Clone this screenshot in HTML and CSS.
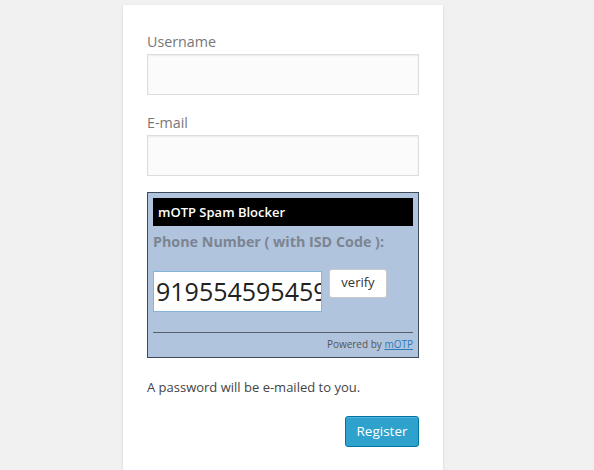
FILE: index.html
```html
<!DOCTYPE html>
<html>
<head>
<meta charset="utf-8">
<link rel="stylesheet" href="styles.css">
</head>
<body>
<form class="card">
  <label class="field-label">Username</label>
  <div class="text-input"></div>
  <label class="field-label second">E-mail</label>
  <div class="text-input"></div>
  <div class="motp">
    <div class="motp-title">mOTP Spam Blocker</div>
    <div class="motp-label">Phone Number ( with ISD Code ):</div>
    <div class="motp-row">
      <div class="phone-input">919554595459</div>
      <div class="verify-btn">verify</div>
    </div>
    <div class="motp-rule"></div>
    <div class="powered">Powered by <span class="powered-link">mOTP</span></div>
  </div>
  <p class="note">A password will be e-mailed to you.</p>
  <div class="actions"><div class="register-btn">Register</div></div>
</form>
</body>
</html>
```
FILE: styles.css
```css
html, body { margin: 0; padding: 0; }
body {
  background: #f1f1f1;
  font-family: "Open Sans", "Noto Sans", sans-serif;
  height: 470px;
  overflow: hidden;
}
.card {
  display: block;
  box-sizing: border-box;
  width: 320px;
  margin: 5px 0 0 123px;
  padding: 26px 24px 24px;
  background: #fff;
  box-shadow: 0 1px 3px rgba(0,0,0,0.13);
}
.field-label {
  display: block;
  font-size: 14.3px;
  line-height: 21px;
  color: #777;
}
.field-label.second { margin-top: 17px; }
.text-input {
  box-sizing: border-box;
  height: 41px;
  margin-top: 2px;
  border: 1px solid #ddd;
  background: #fbfbfb;
  box-shadow: inset 0 1px 2px rgba(0,0,0,0.07);
}
.motp {
  margin-top: 16px;
  border: 1px solid #3e4a5a;
  background: #b0c4de;
  padding: 5px 5px 2px;
}
.motp-title {
  background: #000;
  color: #fff;
  font-size: 13px;
  font-weight: 600;
  line-height: 28px;
  padding-left: 5px;
}
.motp-label {
  margin-top: 5px;
  font-size: 14.3px;
  font-weight: 700;
  color: #7c8491;
  line-height: 22px;
}
.motp-row {
  display: flex;
  align-items: flex-start;
  margin-top: 16px;
}
.phone-input {
  box-sizing: border-box;
  width: 169px;
  height: 41px;
  margin-top: 2px;
  border: 1px solid #86b4d9;
  background: #fff;
  font-size: 25px;
  line-height: 39px;
  padding-left: 2px;
  color: #222;
  white-space: nowrap;
  overflow: hidden;
}
.verify-btn {
  box-sizing: border-box;
  margin-left: 7px;
  width: 58px;
  height: 29px;
  border: 1px solid #c9c9c9;
  border-radius: 3px;
  background: #fff;
  font-size: 13px;
  line-height: 25px;
  text-align: center;
  color: #333;
}
.motp-rule {
  margin-top: 20px;
  height: 1px;
  background: #5a5f66;
}
.powered {
  text-align: right;
  font-size: 10px;
  line-height: 22px;
  color: #555;
}
.powered-link { color: #2b7bb9; text-decoration: underline; }
.note {
  margin: 19px 0 0;
  font-size: 13px;
  line-height: 20px;
  color: #444;
}
.actions {
  display: flex;
  justify-content: flex-end;
  margin-top: 19px;
}
.register-btn {
  box-sizing: border-box;
  width: 74px;
  height: 31px;
  background: #2ea2cc;
  border: 1px solid #0074a2;
  border-radius: 3px;
  box-shadow: inset 0 1px 0 rgba(120,200,230,0.5);
  color: #fff;
  font-size: 13.5px;
  line-height: 28px;
  text-align: center;
}
```
